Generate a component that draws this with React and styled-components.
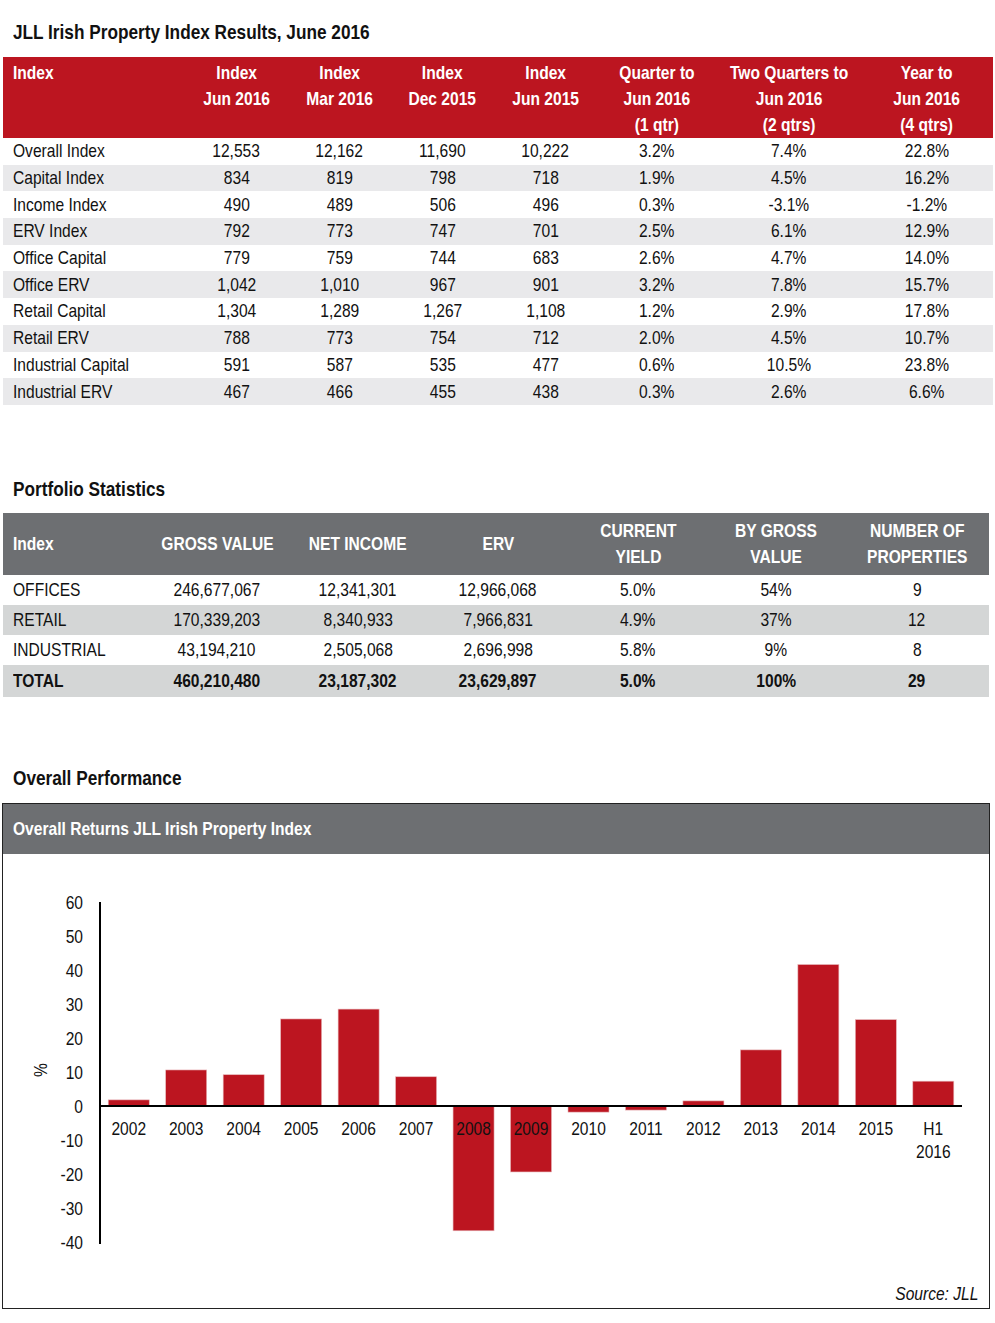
import React from "react";
import styled, { createGlobalStyle } from "styled-components";

// No Arial Narrow in the sandbox: Liberation Sans squeezed to 82% has the same metrics
const FONT = `"Liberation Sans", Arial, sans-serif`;
const SQUEEZE = 0.82;
const RED = "#bc1520";
const GREY = "#6d6f72";

const GlobalStyle = createGlobalStyle`
  body {
    margin: 0;
    background: #fff;
    font-family: ${FONT};
    color: #111;
  }
`;

const Page = styled.div`
  width: 995px;
  padding: 19px 0 14px;
`;

const Narrow = styled.span`
  display: inline-block;
  white-space: nowrap;
  transform: scaleX(${SQUEEZE});
  transform-origin: ${(p) => p.$origin || "center"};
`;

const SectionTitle = styled.h2`
  margin: ${(p) => p.$mt || 0}px 0 ${(p) => p.$mb || 0}px 13px;
  font-size: 21px;
  line-height: 26px;
  font-weight: bold;
`;

const Table = styled.table`
  margin-left: 3px;
  width: ${(p) => p.$width}px;
  border-collapse: collapse;
  table-layout: fixed;
  font-size: 19px;
`;

const HeadRow = styled.tr`
  height: ${(p) => p.$height}px;
  background: ${(p) => p.$bg};
`;

const Th = styled.th`
  padding: ${(p) => (p.$top ? "3px" : 0)} 0 0 ${(p) => (p.$left ? "10px" : 0)};
  vertical-align: ${(p) => (p.$top ? "top" : "middle")};
  text-align: ${(p) => (p.$left ? "left" : "center")};
  color: #fff;
  font-weight: bold;
  line-height: 26px;
`;

const Row = styled.tr`
  height: ${(p) => p.$height}px;
  background: ${(p) => (p.$shade ? p.$shade : "#fff")};
  font-weight: ${(p) => (p.$bold ? "bold" : "normal")};
`;

const Td = styled.td`
  padding: 0 0 0 ${(p) => (p.$left ? "10px" : 0)};
  text-align: ${(p) => (p.$left ? "left" : "center")};
  vertical-align: middle;
  line-height: 24px;
  white-space: nowrap;
`;

const ChartBox = styled.div`
  margin-left: 2px;
  width: 986px;
  border: 1px solid #222;
`;

const ChartHeader = styled.div`
  height: 50px;
  line-height: 50px;
  padding-left: 10px;
  background: ${GREY};
  color: #fff;
  font-size: 19px;
  font-weight: bold;
`;

const ChartSvg = styled.svg`
  display: block;
  font-family: ${FONT};
  font-size: 19px;
`;

const Source = styled.div`
  height: 24px;
  line-height: 20px;
  padding-right: 11px;
  text-align: right;
  font-size: 19px;
  font-style: italic;
`;

const indexCols = [182, 103, 103, 103, 103, 120, 144, 132];
const indexHead = [
  ["Index"],
  ["Index", "Jun 2016"],
  ["Index", "Mar 2016"],
  ["Index", "Dec 2015"],
  ["Index", "Jun 2015"],
  ["Quarter to", "Jun 2016", "(1 qtr)"],
  ["Two Quarters to", "Jun 2016", "(2 qtrs)"],
  ["Year to", "Jun 2016", "(4 qtrs)"],
];
const indexRows = [
  ["Overall Index", "12,553", "12,162", "11,690", "10,222", "3.2%", "7.4%", "22.8%"],
  ["Capital Index", "834", "819", "798", "718", "1.9%", "4.5%", "16.2%"],
  ["Income Index", "490", "489", "506", "496", "0.3%", "-3.1%", "-1.2%"],
  ["ERV Index", "792", "773", "747", "701", "2.5%", "6.1%", "12.9%"],
  ["Office Capital", "779", "759", "744", "683", "2.6%", "4.7%", "14.0%"],
  ["Office ERV", "1,042", "1,010", "967", "901", "3.2%", "7.8%", "15.7%"],
  ["Retail Capital", "1,304", "1,289", "1,267", "1,108", "1.2%", "2.9%", "17.8%"],
  ["Retail ERV", "788", "773", "754", "712", "2.0%", "4.5%", "10.7%"],
  ["Industrial Capital", "591", "587", "535", "477", "0.6%", "10.5%", "23.8%"],
  ["Industrial ERV", "467", "466", "455", "438", "0.3%", "2.6%", "6.6%"],
];

const statCols = [142, 144, 138, 142, 138, 138, 144];
const statHead = [
  ["Index"],
  ["GROSS VALUE"],
  ["NET INCOME"],
  ["ERV"],
  ["CURRENT", "YIELD"],
  ["BY GROSS", "VALUE"],
  ["NUMBER OF", "PROPERTIES"],
];
const statRows = [
  ["OFFICES", "246,677,067", "12,341,301", "12,966,068", "5.0%", "54%", "9"],
  ["RETAIL", "170,339,203", "8,340,933", "7,966,831", "4.9%", "37%", "12"],
  ["INDUSTRIAL", "43,194,210", "2,505,068", "2,696,998", "5.8%", "9%", "8"],
  ["TOTAL", "460,210,480", "23,187,302", "23,629,897", "5.0%", "100%", "29"],
];

const returns = [
  ["2002", 1.8],
  ["2003", 10.6],
  ["2004", 9.2],
  ["2005", 25.6],
  ["2006", 28.5],
  ["2007", 8.6],
  ["2008", -36.7],
  ["2009", -19.4],
  ["2010", -1.8],
  ["2011", -1.2],
  ["2012", 1.5],
  ["2013", 16.5],
  ["2014", 41.6],
  ["2015", 25.4],
  ["H1 2016", 7.3],
];

const lines = (parts) =>
  parts.map((t, i) => (
    <React.Fragment key={i}>
      {i > 0 && <br />}
      {t}
    </React.Fragment>
  ));

const ReturnsChart = () => {
  const axisX = 97;
  const zeroY = 252;
  const scale = 3.4;
  const step = 57.47;
  const barW = 41;
  const ticks = [60, 50, 40, 30, 20, 10, 0, -10, -20, -30, -40];

  return (
    <ChartSvg width="986" height="430" viewBox="0 0 986 430">
      {returns.map(([label, v], i) => {
        const cx = axisX + step * i + step / 2;
        const h = Math.abs(v) * scale;
        const y = v >= 0 ? zeroY - h : zeroY;
        return (
          <rect
            key={label}
            x={cx - barW / 2}
            y={y}
            width={barW}
            height={h}
            fill={RED}
            stroke="#e7b7ba"
            strokeWidth="0.6"
          />
        );
      })}
      {ticks.map((t) => (
        <text
          key={t}
          transform={`translate(80 ${zeroY - t * scale + 7}) scale(${SQUEEZE} 1)`}
          textAnchor="end"
          fill="#111"
        >
          {t}
        </text>
      ))}
      <text
        transform={`translate(38 216) rotate(-90) scale(${SQUEEZE} 1)`}
        y="6"
        textAnchor="middle"
        fill="#111"
      >
        %
      </text>
      <line x1={axisX} y1="48" x2={axisX} y2="390" stroke="#000" strokeWidth="2" />
      <line x1={axisX} y1={zeroY} x2="959" y2={zeroY} stroke="#000" strokeWidth="2" />
      {returns.map(([label], i) => {
        const cx = axisX + step * i + step / 2;
        const parts = label.split(" ");
        return (
          <text
            key={label}
            transform={`translate(${cx} 281) scale(${SQUEEZE} 1)`}
            textAnchor="middle"
            fill="#111"
          >
            {parts.map((p, j) => (
              <tspan key={j} x="0" dy={j === 0 ? 0 : 23}>
                {p}
              </tspan>
            ))}
          </text>
        );
      })}
    </ChartSvg>
  );
};

export default function App() {
  return (
    <>
      <GlobalStyle />
      <Page>
        <SectionTitle $mb={12}>
          <Narrow $origin="left">JLL Irish Property Index Results, June 2016</Narrow>
        </SectionTitle>
        <Table $width={990}>
          <colgroup>
            {indexCols.map((w, i) => (
              <col key={i} style={{ width: w }} />
            ))}
          </colgroup>
          <thead>
            <HeadRow $height={81} $bg={RED}>
              {indexHead.map((h, i) => (
                <Th key={i} $top $left={i === 0}>
                  <Narrow $origin={i === 0 ? "left" : "center"}>{lines(h)}</Narrow>
                </Th>
              ))}
            </HeadRow>
          </thead>
          <tbody>
            {indexRows.map((r, i) => (
              <Row key={r[0]} $height={26.7} $shade={i % 2 ? "#e9e9eb" : null}>
                {r.map((c, j) => (
                  <Td key={j} $left={j === 0}>
                    <Narrow $origin={j === 0 ? "left" : "center"}>{c}</Narrow>
                  </Td>
                ))}
              </Row>
            ))}
          </tbody>
        </Table>

        <SectionTitle $mt={71} $mb={11}>
          <Narrow $origin="left">Portfolio Statistics</Narrow>
        </SectionTitle>
        <Table $width={986}>
          <colgroup>
            {statCols.map((w, i) => (
              <col key={i} style={{ width: w }} />
            ))}
          </colgroup>
          <thead>
            <HeadRow $height={62} $bg={GREY}>
              {statHead.map((h, i) => (
                <Th key={i} $left={i === 0}>
                  <Narrow $origin={i === 0 ? "left" : "center"}>{lines(h)}</Narrow>
                </Th>
              ))}
            </HeadRow>
          </thead>
          <tbody>
            {statRows.map((r, i) => (
              <Row
                key={r[0]}
                $height={i === 3 ? 32 : 30}
                $shade={i % 2 ? "#d4d6d6" : null}
                $bold={i === 3}
              >
                {r.map((c, j) => (
                  <Td key={j} $left={j === 0}>
                    <Narrow $origin={j === 0 ? "left" : "center"}>{c}</Narrow>
                  </Td>
                ))}
              </Row>
            ))}
          </tbody>
        </Table>

        <SectionTitle $mt={68} $mb={12}>
          <Narrow $origin="left">Overall Performance</Narrow>
        </SectionTitle>
        <ChartBox>
          <ChartHeader>
            <Narrow $origin="left">Overall Returns JLL Irish Property Index</Narrow>
          </ChartHeader>
          <ReturnsChart />
          <Source>
            <Narrow $origin="right">Source: JLL</Narrow>
          </Source>
        </ChartBox>
      </Page>
    </>
  );
}
